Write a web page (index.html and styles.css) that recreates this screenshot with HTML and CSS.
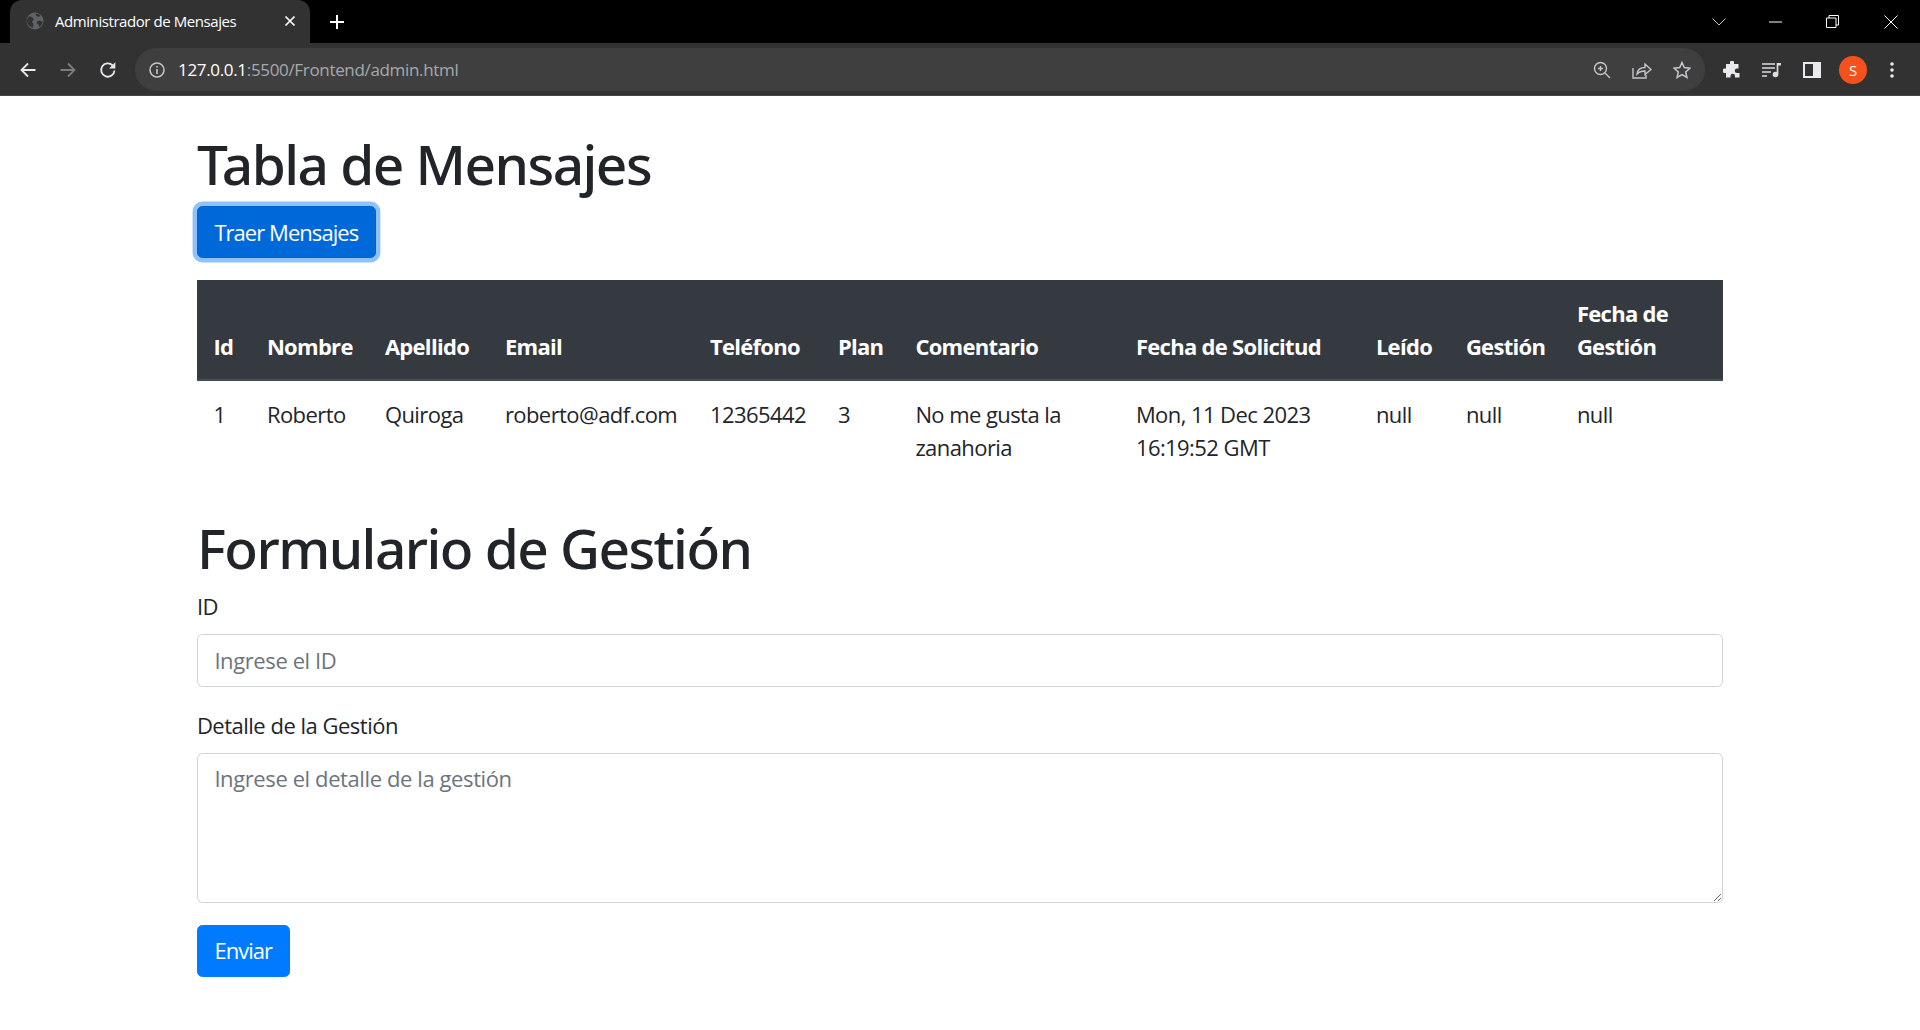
FILE: index.html
```html
<!DOCTYPE html>
<html lang="es">
<head>
<meta charset="utf-8">
<title>Administrador de Mensajes</title>
<link rel="stylesheet" href="styles.css">
</head>
<body>
<header class="chrome">
  <div class="tabstrip">
    <div class="tab">
      <svg class="favicon" viewBox="0 0 18 18" width="18" height="18"><circle cx="9" cy="9" r="8.500" fill="#5f6368"/><path d="M3 4.500c2 0 3 .6 4 1.600s.7 2-.3 2.600-.6 1.800.2 2.400.6 2.400-.2 4.600C3.700 15 1 12 1 9c0-1.700.8-3.300 2-4.500zM10 1.500c1.500 0 3.300.8 4.500 2-1 1.500-2.500 1.500-3.300 1s-1.700-1.500-1.200-3zM16.500 9.500c0 2.500-1.500 4.500-3 5.500-.8-1-.8-2.500-1.800-3s-1.500-1.700-.5-2.500 3-1 5.300 0z" fill="#323232"/></svg>
      <span class="tab-title">Administrador de Mensajes</span>
      <svg class="tab-close" viewBox="0 0 12 12" width="12" height="12"><path d="M1.500 1.500l9 9M10.500 1.500l-9 9" stroke="#fff" stroke-width="1.700" fill="none"/></svg>
    </div>
    <svg class="new-tab" viewBox="0 0 16 16" width="16" height="16"><path d="M8 1v14M1 8h14" stroke="#fff" stroke-width="2" fill="none"/></svg>
    <div class="window-controls">
      <svg viewBox="0 0 14 8" width="14" height="8"><path d="M.5.500L7 7l6.500-6.500" stroke="#c8c8c8" fill="none"/></svg>
      <svg class="wc-min" viewBox="0 0 14 2" width="14" height="2"><path d="M0 1h13" stroke="#fff" fill="none"/></svg>
      <svg class="wc-max" viewBox="0 0 13 13" width="13" height="13"><path d="M.5 3h9.500v9.500H.5zM3 3V.5h9.500V10H10" stroke="#fff" fill="none"/></svg>
      <svg class="wc-close" viewBox="0 0 14 14" width="14" height="14"><path d="M.5.500l13 13M13.500.500l-13 13" stroke="#fff" fill="none"/></svg>
    </div>
  </div>
  <div class="toolbar">
    <div class="nav">
      <svg viewBox="0 0 18 18" width="18" height="18"><path d="M16.500 9H2.500M9 2.500L2.500 9 9 15.500" stroke="#e8eaed" stroke-width="1.800" fill="none"/></svg>
      <svg viewBox="0 0 18 18" width="18" height="18"><path d="M1.500 9h14M9 2.500L15.500 9 9 15.500" stroke="#7b7d80" stroke-width="1.800" fill="none"/></svg>
      <svg viewBox="0 0 18 18" width="18" height="18"><path d="M15.500 9.500a6.700 6.700 0 1 1-1.900-5.200" stroke="#e8eaed" stroke-width="1.800" fill="none"/><path d="M16.300 1.300v6.200h-6.200z" fill="#e8eaed"/></svg>
    </div>
    <div class="omnibox">
      <svg class="info" viewBox="0 0 16 16" width="16" height="16"><circle cx="8" cy="8" r="7" stroke="#c4c7c9" stroke-width="1.500" fill="none"/><path d="M8 7v5M8 4v1.600" stroke="#c4c7c9" stroke-width="1.600" fill="none"/></svg>
      <span class="url"><span class="url-host">127.0.0.1</span>:5500/Frontend/admin.html</span>
      <div class="omni-actions">
        <svg viewBox="0 0 18 18" width="18" height="18"><circle cx="7.500" cy="7.500" r="6" stroke="#c4c7c9" stroke-width="1.400" fill="none"/><path d="M12 12l5 5M7.500 5v5M5 7.500h5" stroke="#c4c7c9" stroke-width="1.400" fill="none"/></svg>
        <svg viewBox="0 0 20 18" width="20" height="18"><path d="M1 7v10h13v-3" stroke="#c4c7c9" stroke-width="1.400" fill="none"/><path d="M5 13c.5-4 3.500-6.500 8-6.500V3l6 5.500-6 5V10c-3.500 0-6 1-8 3z" stroke="#c4c7c9" stroke-width="1.400" fill="none"/></svg>
        <svg viewBox="0 0 18 18" width="18" height="18"><path d="M9 1.500l2.300 5.100 5.500.6-4.100 3.700 1.200 5.500L9 13.600l-4.900 2.800 1.200-5.500-4.100-3.700 5.500-.6z" stroke="#c4c7c9" stroke-width="1.500" fill="none"/></svg>
      </div>
    </div>
    <div class="extensions">
      <svg viewBox="0 0 18 18" width="18" height="18"><path d="M7 1.500a2 2 0 0 1 4 0V3h4.500v4.500H14a2.200 2.200 0 0 0 0 4.500h2.500v4.500H12V15a2.200 2.200 0 0 0-4.500 0v1.500H3V12H1.500a2.200 2.200 0 0 1 0-4.500H3V3h4z" fill="#e8eaed"/></svg>
      <svg viewBox="0 0 20 16" width="20" height="16"><path d="M0 2h13M0 6h13M0 10h9M0 14h5" stroke="#dadce0" stroke-width="1.500" fill="none"/><path d="M15.500 1v11" stroke="#dadce0" stroke-width="1.700" fill="none"/><path d="M15.500 1H19v2.500h-3.500z" fill="#dadce0"/><circle cx="13.500" cy="12.500" r="2.800" fill="#dadce0"/></svg>
      <svg viewBox="0 0 18 16" width="18" height="16"><rect x="1" y="1" width="16" height="14" stroke="#e8eaed" stroke-width="2" fill="none"/><rect x="10" y="1" width="7" height="14" fill="#e8eaed"/></svg>
      <span class="avatar">S</span>
      <svg class="menu-dots" viewBox="0 0 4 16" width="4" height="16"><circle cx="2" cy="2" r="1.800" fill="#e8eaed"/><circle cx="2" cy="8" r="1.800" fill="#e8eaed"/><circle cx="2" cy="14" r="1.800" fill="#e8eaed"/></svg>
    </div>
  </div>
</header>
<main class="container">
  <h1 class="title">Tabla de Mensajes</h1>
  <button class="btn btn-focus" type="button">Traer Mensajes</button>
  <table class="table">
    <colgroup>
      <col class="c-id"><col class="c-nombre"><col class="c-apellido"><col class="c-email"><col class="c-tel"><col class="c-plan"><col class="c-com"><col class="c-fecha"><col class="c-leido"><col class="c-gest"><col class="c-fg">
    </colgroup>
    <thead>
      <tr>
        <th>Id</th><th>Nombre</th><th>Apellido</th><th>Email</th><th>Teléfono</th><th>Plan</th><th>Comentario</th><th>Fecha de Solicitud</th><th>Leído</th><th>Gestión</th><th>Fecha de Gestión</th>
      </tr>
    </thead>
    <tbody>
      <tr>
        <td>1</td><td>Roberto</td><td>Quiroga</td><td>roberto@adf.com</td><td>12365442</td><td>3</td><td>No me gusta la zanahoria</td><td>Mon, 11 Dec 2023 16:19:52 GMT</td><td>null</td><td>null</td><td>null</td>
      </tr>
    </tbody>
  </table>
  <h1 class="title title-form">Formulario de Gestión</h1>
  <form class="form">
    <div class="group">
      <label class="label" for="id">ID</label>
      <input class="control" id="id" type="text" placeholder="Ingrese el ID">
    </div>
    <div class="group">
      <label class="label" for="detalle">Detalle de la Gestión</label>
      <textarea class="control area" id="detalle" rows="4" placeholder="Ingrese el detalle de la gestión"></textarea>
    </div>
    <button class="btn" type="button">Enviar</button>
  </form>
</main>
</body>
</html>
```
FILE: styles.css
```css
* { box-sizing: border-box; }
html { font-size: 22px; }
body {
  margin: 0;
  background: #fff;
  color: #212529;
  font-family: "Open Sans", "Noto Sans", sans-serif;
  font-size: 22px;
  line-height: 33px;
  letter-spacing: -0.6px;
}
.chrome { height: 96px; background: #323232; border-bottom: 1px solid #444; letter-spacing: 0; }
.tabstrip { height: 43px; background: #000; display: flex; align-items: center; }
.tab {
  width: 300px; height: 43px; margin-left: 10px; padding: 0 14px 2px 16px;
  background: #323232; border-radius: 12px 12px 0 0;
  display: flex; align-items: center; color: #fff;
  font-size: 15px; line-height: 20px;
}
.favicon { flex: none; margin-right: 11px; }
.tab-title { flex: 1; letter-spacing: -0.43px; white-space: nowrap; }
.tab-close { flex: none; }
.new-tab { margin-left: 19px; }
.window-controls { margin-left: auto; padding-right: 22px; display: flex; align-items: center; }
.wc-min { margin-left: 43px; }
.wc-max { margin-left: 43px; }
.wc-close { margin-left: 45px; }
.toolbar { height: 52px; display: flex; align-items: center; padding: 1px 26px 0 19px; }
.nav { display: flex; gap: 22px; align-items: center; }
.omnibox {
  flex: 1; height: 43px; margin-left: 18px; padding: 0 14px;
  background: #3f3f3f; border-radius: 22px;
  display: flex; align-items: center;
}
.info { flex: none; }
.url { margin-left: 13px; color: #a5a9ad; font-size: 17px; line-height: 24px; letter-spacing: -0.33px; white-space: nowrap; }
.url-host { color: #fff; }
.omni-actions { margin-left: auto; display: flex; align-items: center; gap: 21px; }
.extensions { margin-left: 18px; display: flex; align-items: center; gap: 21px; }
.avatar {
  width: 28px; height: 28px; margin-left: -3px; border-radius: 50%; background: #f4511e; color: #fff;
  font-size: 15px; line-height: 28px; text-align: center;
}
.menu-dots { margin-left: 2px; }
.container { width: 1526.25px; margin: 0 auto; padding-top: 33px; }
.title {
  margin: 0 0 9.500px; padding-top: 1.500px;
  font-family: "Noto Sans", "Open Sans", sans-serif;
  font-size: 55px; line-height: 66px; font-weight: 500; letter-spacing: -1.550px;
}
.btn {
  display: block; height: 52.25px; padding: 0 16.5px;
  border: 1.375px solid #007bff; border-radius: 5.5px;
  background: #007bff; color: #fff;
  font: inherit; letter-spacing: -0.95px;
}
.btn-focus { background: #0069d9; border-color: #0062cc; box-shadow: 0 0 0 4.400px #8fc2f9; }
.table { width: 100%; margin: 22px 0 33px; border-collapse: collapse; table-layout: fixed; }
.c-id { width: 53.5px; }
.c-nombre { width: 118px; }
.c-apellido { width: 120px; }
.c-email { width: 205px; }
.c-tel { width: 128px; }
.c-plan { width: 77.5px; }
.c-com { width: 220.5px; }
.c-fecha { width: 240px; }
.c-leido { width: 90px; }
.c-gest { width: 111px; }
th, td { padding: 16.5px; text-align: left; }
th { background: #343a40; color: #fff; font-weight: 700; vertical-align: bottom; border-bottom: 2.750px solid #454d55; letter-spacing: -0.7px; }
td { vertical-align: top; letter-spacing: -0.57px; }
.group { margin-bottom: 22px; }
.label { display: block; margin-bottom: 11px; letter-spacing: -0.5px; }
.control {
  display: block; width: 100%; height: 52.25px; padding: 8.25px 16.5px;
  border: 1.375px solid #ced4da; border-radius: 5.5px;
  background: #fff; color: #495057;
  font: inherit; letter-spacing: -0.4px;
}
.control::placeholder { color: #6c757d; opacity: 1; }
.area { height: 150px; }
```
